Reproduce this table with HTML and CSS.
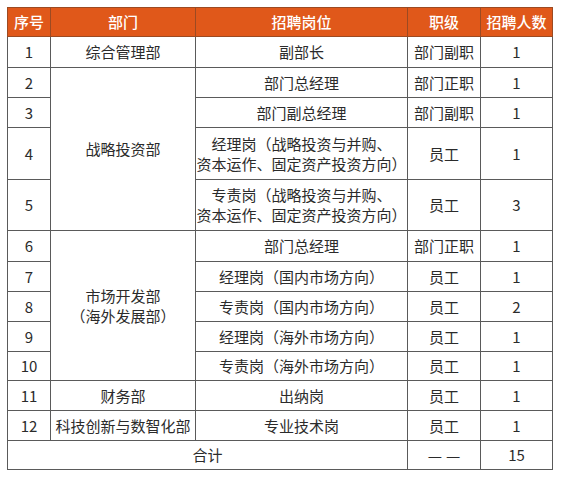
FILE: index.html
```html
<!DOCTYPE html>
<html lang="zh-CN">
<head>
<meta charset="utf-8">
<link rel="stylesheet" href="styles.css">
</head>
<body>
<table class="recruit">
  <colgroup>
    <col class="c-no"><col class="c-dept"><col class="c-pos"><col class="c-lvl"><col class="c-num">
  </colgroup>
  <thead>
    <tr class="h-head"><th>序号</th><th>部门</th><th>招聘岗位</th><th>职级</th><th>招聘人数</th></tr>
  </thead>
  <tbody>
    <tr class="h-31"><td>1</td><td>综合管理部</td><td>副部长</td><td>部门副职</td><td>1</td></tr>
    <tr class="h-30"><td>2</td><td rowspan="4">战略投资部</td><td>部门总经理</td><td>部门正职</td><td>1</td></tr>
    <tr class="h-30"><td>3</td><td>部门副总经理</td><td>部门副职</td><td>1</td></tr>
    <tr class="h-52"><td>4</td><td class="two">经理岗（战略投资与并购、<br>资本运作、固定资产投资方向）</td><td>员工</td><td>1</td></tr>
    <tr class="h-51"><td>5</td><td class="two">专责岗（战略投资与并购、<br>资本运作、固定资产投资方向）</td><td>员工</td><td>3</td></tr>
    <tr class="h-31"><td>6</td><td rowspan="5" class="two">市场开发部<br>（海外发展部）</td><td>部门总经理</td><td>部门正职</td><td>1</td></tr>
    <tr class="h-30"><td>7</td><td>经理岗（国内市场方向）</td><td>员工</td><td>1</td></tr>
    <tr class="h-30"><td>8</td><td>专责岗（国内市场方向）</td><td>员工</td><td>2</td></tr>
    <tr class="h-30"><td>9</td><td>经理岗（海外市场方向）</td><td>员工</td><td>1</td></tr>
    <tr class="h-29"><td>10</td><td>专责岗（海外市场方向）</td><td>员工</td><td>1</td></tr>
    <tr class="h-30"><td>11</td><td>财务部</td><td>出纳岗</td><td>员工</td><td>1</td></tr>
    <tr class="h-30"><td>12</td><td>科技创新与数智化部</td><td>专业技术岗</td><td>员工</td><td>1</td></tr>
    <tr class="h-29"><td colspan="3">合计</td><td><span class="dashes"><span class="dash">—</span><span class="dash">—</span></span></td><td>15</td></tr>
  </tbody>
</table>
</body>
</html>
```
FILE: styles.css
```css
html, body {
  margin: 0;
  padding: 0;
  background: #ffffff;
}
body {
  padding: 7px 0 0 7px;
  font-family: "Noto Sans CJK SC", "Noto Sans", sans-serif;
  font-size: 15px;
  color: #2b2b2b;
}
.recruit {
  border-collapse: collapse;
  table-layout: fixed;
  width: 545px;
}
.c-no { width: 43px; }
.c-dept { width: 145px; }
.c-pos { width: 212px; }
.c-lvl { width: 73px; }
.c-num { width: 72px; }
.recruit th,
.recruit td {
  border: 1px solid #5a5a5a;
  padding: 0;
  text-align: center;
  vertical-align: middle;
  line-height: 20px;
  white-space: nowrap;
  overflow: visible;
}
.recruit th {
  background: #e0581a;
  color: #ffffff;
  font-weight: 500;
  border-color: #9c4a22;
}
.dashes {
  display: inline-flex;
  gap: 4px;
}
.dash {
  display: inline-block;
  font-size: 16px;
}
.h-head { height: 29px; }
.h-29 { height: 29px; }
.h-30 { height: 30px; }
.h-31 { height: 31px; }
.h-51 { height: 51px; }
.h-52 { height: 52px; }
```
